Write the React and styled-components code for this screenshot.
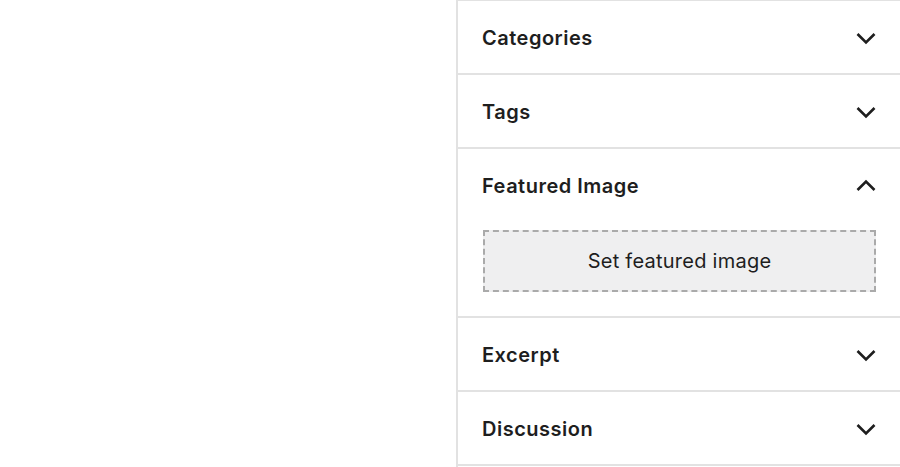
import React from "react";
import styled, { createGlobalStyle } from "styled-components";

const Global = createGlobalStyle`
  html, body { margin: 0; padding: 0; background: #fff; }
  body { font-family: Inter, "Noto Sans", "Liberation Sans", sans-serif; color: #1e1e1e; }
`;

const Page = styled.div`
  display: flex;
  justify-content: flex-end;
  width: 900px;
  height: 467px;
  overflow: hidden;
`;

const Panel = styled.aside`
  width: 442px;
  border-left: 2px solid #e2e2e2;
  border-top: 1px solid #e2e2e2;
  display: flex;
  flex-direction: column;
`;

const Section = styled.section`
  border-bottom: 2px solid #e2e2e2;
`;

const Header = styled.div`
  height: 72px;
  display: flex;
  align-items: center;
  justify-content: space-between;
  padding: 2px 24px 0;
  box-sizing: border-box;
`;

const Title = styled.h2`
  margin: 0;
  font-size: 20px;
  font-weight: 600;
  letter-spacing: 0.5px;
  color: #1e1e1e;
`;

const Body = styled.div`
  padding: 9px 24px 24px 25px;
`;

const DropButton = styled.button`
  width: 100%;
  height: 62px;
  background: #efeff0;
  border: 2px dashed #aaaaaa;
  font-family: inherit;
  font-size: 20px;
  font-weight: 400;
  letter-spacing: 0.25px;
  color: #1e1e1e;
  display: flex;
  align-items: center;
  justify-content: center;
  padding: 0;
`;

const Chevron = ({ up }) => (
  <svg width="20" height="20" viewBox="0 0 20 20" aria-hidden="true">
    <polyline
      points={up ? "1.5,14 10,5.5 18.5,14" : "1.5,6 10,14.5 18.5,6"}
      fill="none"
      stroke="#1e1e1e"
      strokeWidth="2.6"
    />
  </svg>
);

const items = [
  { title: "Categories" },
  { title: "Tags" },
  { title: "Featured Image", open: true },
  { title: "Excerpt" },
  { title: "Discussion" },
];

export default function App() {
  return (
    <>
      <Global />
      <Page>
        <Panel>
          {items.map((it) => (
            <Section key={it.title}>
              <Header>
                <Title>{it.title}</Title>
                <Chevron up={it.open} />
              </Header>
              {it.open && (
                <Body>
                  <DropButton>Set featured image</DropButton>
                </Body>
              )}
            </Section>
          ))}
        </Panel>
      </Page>
    </>
  );
}
